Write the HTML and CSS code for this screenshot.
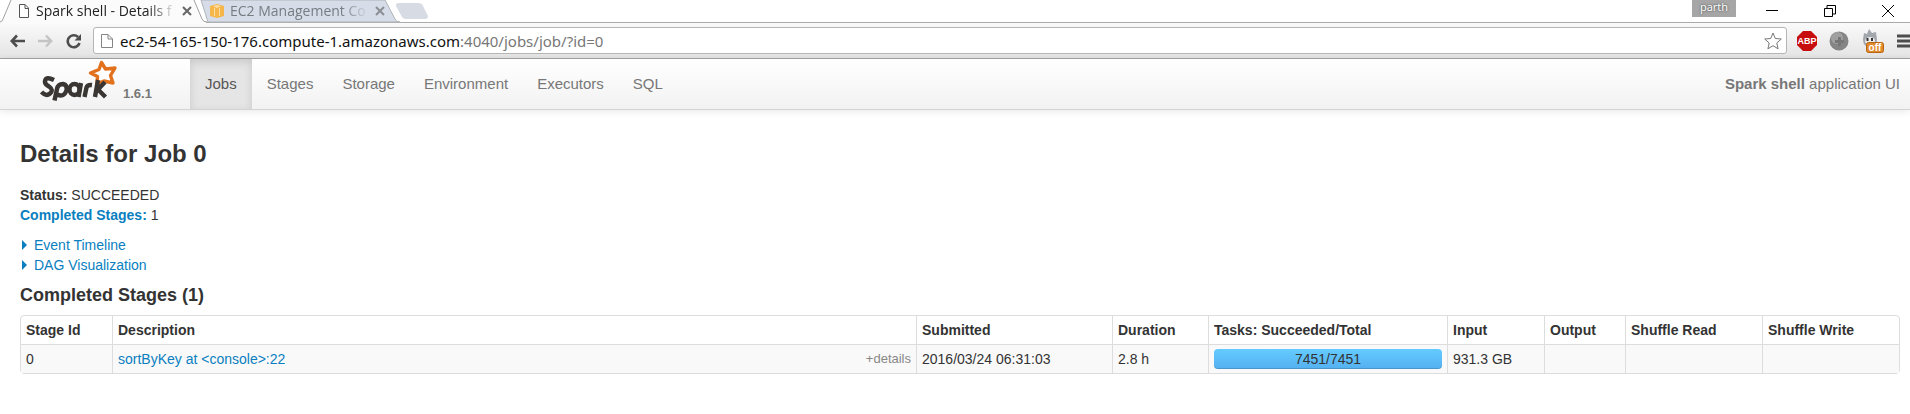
FILE: index.html
```html
<!DOCTYPE html>
<html lang="en">
<head>
<meta charset="utf-8">
<title>Spark shell - Details for Job 0</title>
<link rel="stylesheet" href="styles.css">
</head>
<body>
<header class="browser">
  <div class="tabstrip">
    <svg class="tab-shapes" width="440" height="24" viewBox="0 0 440 24" aria-hidden="true">
      <path d="M208 22 L201 0 H385 L395 19 Q396 22 400 22 Z" fill="#d6dde8" stroke="#b0b3b8"/>
      <path d="M396 6 Q395 3 399 3 H418 Q422 3 423 6 L428 16 Q428 19 425 19 H406 Q403 19 402 17 Z" fill="#d6dbe4"/>
      <path d="M0 22 Q2 22 3 19 L11 0 H194 L202 19 Q203 22 206 22 V24 H0 Z" fill="#fbfbfb"/>
      <path d="M0 22 Q2 22 3 19 L11 0 M194 0 L202 19 Q203 22 207 22" fill="none" stroke="#a0a0a0"/>
    </svg>
    <div class="tab tab-active">
      <svg width="12" height="14" viewBox="0 0 12 14" aria-hidden="true"><path d="M1.500 .5H7L10.500 4V13.500H1.500ZM7 .5V4.500H10.500" fill="#fff" stroke="#555"/></svg>
      <span class="tab-title">Spark shell - Details f</span>
      <button class="tab-close" aria-label="Close tab"><svg width="10" height="10" viewBox="0 0 10 10"><path d="M1 1L9 9M9 1L1 9" stroke="#666" stroke-width="2"/></svg></button>
    </div>
    <div class="tab tab-idle">
      <svg width="14" height="14" viewBox="0 0 14 14" aria-hidden="true"><path d="M0 2L7 0L14 2V12L7 14L0 12Z" fill="#f5b749"/><path d="M3 2L7 1L11 2L7 4Z" fill="#fbdca6"/><path d="M4.500 4V12M9.500 4V12" stroke="#fbdca6"/></svg>
      <span class="tab-title">EC2 Management Co</span>
      <button class="tab-close" aria-label="Close tab"><svg width="10" height="10" viewBox="0 0 10 10"><path d="M1 1L9 9M9 1L1 9" stroke="#8b8e94" stroke-width="2"/></svg></button>
    </div>
    <div class="window-controls">
      <span class="profile">parth</span>
      <button aria-label="Minimize"><svg width="12" height="12" viewBox="0 0 12 12"><path d="M0 5.500H12" stroke="#000"/></svg></button>
      <button aria-label="Restore"><svg width="12" height="12" viewBox="0 0 12 12"><path d="M.5 3.500H8.500V11.500H.5ZM3 3V.5H11.500V9H9" fill="none" stroke="#000"/></svg></button>
      <button aria-label="Close"><svg width="12" height="12" viewBox="0 0 12 12"><path d="M0 0L12 12M12 0L0 12" stroke="#000"/></svg></button>
    </div>
  </div>
  <div class="toolbar">
    <button aria-label="Back"><svg width="16" height="14" viewBox="0 0 16 14"><path d="M16 7H3M8 1.500L2.800 7L8 12.500" fill="none" stroke="#4d4d4d" stroke-width="2.600"/></svg></button>
    <button aria-label="Forward"><svg width="16" height="14" viewBox="0 0 16 14"><path d="M1 7H14M9 1.500L14.200 7L9 12.500" fill="none" stroke="#c4c4c4" stroke-width="2.400"/></svg></button>
    <button aria-label="Reload"><svg width="16" height="16" viewBox="0 0 16 16"><path d="M13 4A6 6 0 1 0 14.500 10" fill="none" stroke="#4d4d4d" stroke-width="2.600"/><path d="M16 1V7.500H9.500Z" fill="#4d4d4d"/></svg></button>
    <div class="address">
      <svg width="12" height="14" viewBox="0 0 12 14" aria-hidden="true"><path d="M.5.5H7L11.500 5V13.500H.5ZM7 .5V5H11.500" fill="#fff" stroke="#858585"/></svg>
      <span class="url" role="textbox" aria-label="Address">ec2-54-165-150-176.compute-1.amazonaws.com<span class="url-path">:4040/jobs/job/?id=0</span></span>
      <button aria-label="Bookmark"><svg width="18" height="18" viewBox="0 0 18 18"><path d="M9 1L11.300 6.500L17.300 7L12.800 11L14.100 16.800L9 13.700L3.900 16.800L5.200 11L.7 7L6.700 6.500Z" fill="#fff" stroke="#777"/></svg></button>
    </div>
    <div class="extensions">
      <button aria-label="Adblock Plus"><svg width="20" height="20" viewBox="0 0 20 20"><path d="M6 0H14L20 6V14L14 20H6L0 14V6Z" fill="#c70d0d"/><text x="10" y="13" class="abp">ABP</text></svg></button>
      <button aria-label="Globe"><svg width="20" height="20" viewBox="0 0 20 20"><circle cx="10" cy="10" r="9.500" fill="#858585"/><circle cx="8" cy="7" r="6" fill="#a0a0a0"/><path d="M9 6H12V9H15V12H12V15H9V12H6V9H9Z" fill="#777"/></svg></button>
      <button aria-label="Extension off"><svg width="24" height="24" viewBox="0 0 24 24"><path d="M2 10L3 4L6 5L8 0L11 4L15 3L16 11Q16 18 9 18Q2 18 2 10Z" fill="#a2a6ad"/><ellipse cx="9" cy="12" rx="5" ry="4" fill="#eee"/><path d="M6.500 9V12M11 9V12" stroke="#333" stroke-width="2"/><rect x="5.500" y="13.500" width="17" height="10" rx="2" fill="#e08a2c" stroke="#b8630f"/><text x="14" y="22" class="off">off</text></svg></button>
      <button aria-label="Menu"><svg width="13" height="14" viewBox="0 0 13 14"><path d="M0 2H13M0 7H13M0 12H13" stroke="#4d4d4d" stroke-width="3"/></svg></button>
    </div>
  </div>
</header>
<nav class="navbar">
  <a class="brand" href="#" aria-label="Spark 1.6.1">
    <svg width="78" height="44" viewBox="0 0 78 44" aria-hidden="true">
      <path d="M61.500 3.500L65.500 10L75 9L70.500 16.500L73 24L64 22L57 24.500L57.500 17.500L50.500 14L59 10.500Z" fill="#fff" stroke="#e2711d" stroke-width="3.400" stroke-linejoin="round"/>
      <g fill="none" stroke="#3a3633" stroke-width="4.400" stroke-linejoin="round"><path d="M14 21Q6 17 5 22Q4.500 25 9 27.500Q14 31 10 34.500Q6 38 1.500 33"/><path d="M14.500 41.500L17 30Q18 25 23 25Q27.500 26 26.500 31Q25 36.500 20.500 36.500Q17 36 16 34"/><ellipse cx="34.500" cy="30.500" rx="5" ry="5.500"/><path d="M41 24L38.500 38M44.500 38L46.500 28.500Q47.500 25.500 52 26"/><path d="M55 38L58 21M65 23L58 30.500L65.500 38"/></g>
    </svg>
    <span class="version">1.6.1</span>
  </a>
  <ul class="menu">
    <li><a class="active" href="#">Jobs</a></li>
    <li><a href="#">Stages</a></li>
    <li><a href="#">Storage</a></li>
    <li><a href="#">Environment</a></li>
    <li><a href="#">Executors</a></li>
    <li><a href="#">SQL</a></li>
  </ul>
  <p class="app-name"><strong>Spark shell</strong> application UI</p>
</nav>
<main class="content">
  <h1>Details for Job 0</h1>
  <ul class="summary">
    <li><strong>Status:</strong> SUCCEEDED</li>
    <li><a href="#completed"><strong>Completed Stages:</strong></a> 1</li>
  </ul>
  <div class="expanders">
    <a href="#"><span class="arrow"></span>Event Timeline</a>
    <a href="#"><span class="arrow"></span>DAG Visualization</a>
  </div>
  <h2 id="completed">Completed Stages (1)</h2>
  <table class="stages">
    <colgroup><col class="c-id"><col class="c-desc"><col class="c-sub"><col class="c-dur"><col class="c-tasks"><col class="c-in"><col class="c-out"><col class="c-shuffle"><col class="c-shuffle"></colgroup>
    <thead><tr><th>Stage Id</th><th>Description</th><th>Submitted</th><th>Duration</th><th>Tasks: Succeeded/Total</th><th>Input</th><th>Output</th><th>Shuffle Read</th><th>Shuffle Write</th></tr></thead>
    <tbody><tr><td>0</td><td><div class="desc"><a href="#">sortByKey at &lt;console&gt;:22</a><span class="details">+details</span></div></td><td>2016/03/24 06:31:03</td><td>2.8 h</td><td><div class="progress">7451/7451</div></td><td>931.3 GB</td><td></td><td></td><td></td></tr></tbody>
  </table>
</main>
</body>
</html>
```
FILE: styles.css
```css
* { box-sizing: border-box; }
body { margin: 0; background: #fff; color: #333; font: 14px/20px "Liberation Sans", Arial, sans-serif; }
button { display: flex; align-items: center; justify-content: center; padding: 0; border: 0; background: none; }
a { color: #0a7fc0; text-decoration: none; }
ul { list-style: none; margin: 0; padding: 0; }
svg { display: block; flex: none; }

.browser { font-family: "Noto Sans", "Open Sans", sans-serif; }
.tabstrip { position: relative; display: flex; height: 22px; background: #fff; }
.tab-shapes { position: absolute; left: 0; top: 0; }
.tab { position: relative; display: flex; align-items: center; gap: 6px; height: 22px; }
.tab-active { width: 192px; padding-left: 18px; color: #222; }
.tab-idle { width: 193px; padding-left: 18px; color: #777b82; }
.tab-title { width: 140px; white-space: nowrap; font-family: "Open Sans", "Noto Sans", sans-serif; font-size: 14px; line-height: 22px; -webkit-mask-image: linear-gradient(90deg, #000 80%, transparent); mask-image: linear-gradient(90deg, #000 80%, transparent); }
.window-controls { display: flex; align-items: center; margin-left: auto; padding-right: 16px; gap: 46px; }
.profile { align-self: flex-start; width: 44px; height: 17px; margin-right: -16px; background: #a6a6a6; color: #fff; font-size: 11px; line-height: 14px; text-align: center; text-shadow: 0 0 2px #333; }

.toolbar { display: flex; align-items: center; height: 37px; padding-left: 9px; border-top: 1px solid #aaa; border-bottom: 1px solid #a3a3a3; background: linear-gradient(#fafafa, #e4e4e4); gap: 12px; }
.address { display: flex; flex: 1; align-items: center; height: 27px; padding: 0 4px 0 7px; gap: 7px; border: 1px solid #b5b5b5; border-radius: 3px; background: #fff; }
.url { flex: 1; color: #111; font-size: 15px; line-height: 24px; white-space: nowrap; }
.url-path { color: #777; }
.extensions { display: flex; align-items: center; gap: 12px; margin-left: -2px; }
.abp { fill: #fff; font: bold 9px "Liberation Sans", Arial, sans-serif; text-anchor: middle; }
.off { fill: #fff; font: bold 10px "Liberation Sans", Arial, sans-serif; text-anchor: middle; }

.navbar { display: flex; align-items: stretch; height: 51px; padding-right: 10px; border-bottom: 1px solid #d4d4d4; background: linear-gradient(#fff, #f2f2f2); box-shadow: 0 1px 8px rgba(0, 0, 0, .1); font-size: 15px; }
.brand { display: flex; gap: 5px; width: 190px; padding-left: 40px; }
.version { margin-top: 25px; color: #777; font-size: 13px; font-weight: bold; }
.menu { display: flex; gap: 1px; }
.menu a { display: block; padding: 15px 14px; height: 50px; color: #777; }
.menu .active { padding: 15px; background: #e5e5e5; box-shadow: inset 0 3px 8px rgba(0, 0, 0, .125); color: #555; }
.app-name { margin: 15px 0 0 auto; color: #777; }

.content { padding: 24px 10px 20px 20px; }
h1 { margin: 0 0 11px; font-size: 24px; line-height: 40px; }
h2 { margin: 10px 0; font-size: 18px; line-height: 20px; }
.expanders { display: flex; flex-direction: column; align-items: flex-start; margin-top: 10px; }
.expanders a { display: flex; align-items: center; gap: 7px; }
.arrow { margin-left: 2px; border: solid transparent; border-width: 5px 0 5px 5px; border-left-color: #0a7fc0; }

.stages { width: 100%; table-layout: fixed; border: 1px solid #ddd; border-radius: 4px; border-collapse: separate; border-spacing: 0; }
.stages th, .stages td { padding: 4px 5px; text-align: left; font-size: 14px; line-height: 20px; white-space: nowrap; }
.stages th + th, .stages td + td { border-left: 1px solid #ddd; }
.stages td { border-top: 1px solid #ddd; background: #f9f9f9; }
.c-id { width: 91px; }
.c-sub { width: 196px; }
.c-dur { width: 96px; }
.c-tasks { width: 239px; }
.c-in { width: 97px; }
.c-out { width: 81px; }
.c-shuffle { width: 137px; }
.desc { display: flex; justify-content: space-between; }
.details { color: #888; font-size: 13px; }
.progress { height: 20px; border-radius: 4px; background: linear-gradient(#64cbff, #54b0f0); box-shadow: inset 0 -1px 0 rgba(0, 0, 0, .15); text-align: center; }
```
